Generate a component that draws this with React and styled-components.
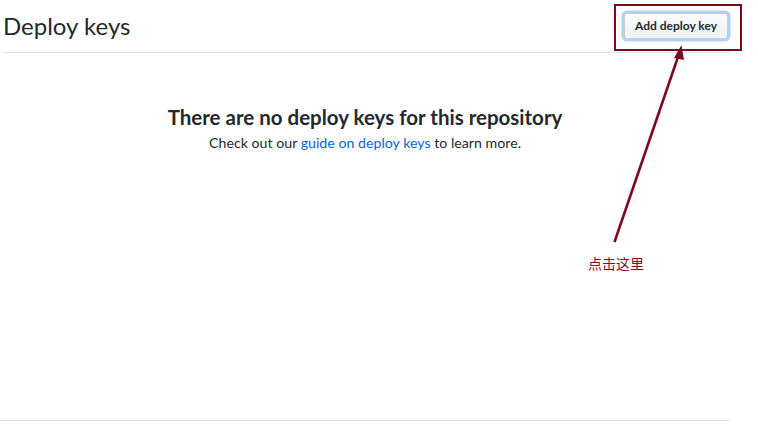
import React from "react";
import styled, { createGlobalStyle } from "styled-components";

const GlobalStyle = createGlobalStyle`
  html, body {
    margin: 0;
    padding: 0;
    background: #fff;
  }
  body {
    font-family: Lato, "Noto Sans", sans-serif;
    color: #24292e;
    font-size: 14px;
    line-height: 1.5;
  }
`;

const Page = styled.div`
  position: relative;
  width: 758px;
  height: 427px;
  overflow: hidden;
`;

const Main = styled.div`
  width: 730px;
  padding-top: 8px;
`;

const Subhead = styled.div`
  display: flex;
  align-items: center;
  margin-left: 3px;
  padding-bottom: 8px;
  border-bottom: 1px solid #e1e4e8;
`;

const Heading = styled.h2`
  flex: 1;
  margin: 0;
  font-size: 24px;
  font-weight: 400;
  line-height: 36px;
  color: #24292e;
`;

const Button = styled.button`
  margin-right: 2px;
  padding: 2px 10px;
  font-family: Lato, "Noto Sans", sans-serif;
  font-size: 12px;
  font-weight: 700;
  line-height: 20px;
  color: #24292e;
  background-color: #eff3f6;
  background-image: linear-gradient(-180deg, #fafbfc 0%, #eff3f6 90%);
  border: 1px solid rgba(27, 31, 35, 0.2);
  border-radius: 3px;
  box-shadow: 0 0 0 2.5px rgba(3, 102, 214, 0.3);
  cursor: pointer;
`;

const Blankslate = styled.div`
  height: 368px;
  box-sizing: border-box;
  padding-top: 49px;
  text-align: center;
  border-bottom: 1px solid #e1e4e8;
`;

const BlankTitle = styled.h3`
  margin: 0;
  font-size: 20.5px;
  font-weight: 700;
  line-height: 30px;
  color: #24292e;
`;

const BlankText = styled.p`
  margin: 0;
  font-size: 14.2px;
  line-height: 21px;
  color: #24292e;
`;

const Link = styled.a`
  color: #0366d6;
  text-decoration: none;
`;

const Overlay = styled.div`
  position: absolute;
  inset: 0;
  pointer-events: none;
`;

const Highlight = styled.div`
  position: absolute;
  left: 614px;
  top: 4px;
  width: 124px;
  height: 43px;
  border: 2px solid #7b0a1f;
`;

const Note = styled.span`
  position: absolute;
  left: 588px;
  top: 253px;
  font-family: "Noto Sans CJK SC", sans-serif;
  font-size: 14px;
  line-height: 20px;
  color: #8a0a1f;
  text-shadow: 0 0 2px #fff, 0 0 2px #fff, 0 0 1px #fff;
`;

const Arrow = () => (
  <svg
    width="758"
    height="427"
    viewBox="0 0 758 427"
    style={{ position: "absolute", left: 0, top: 0 }}
  >
    <line x1="614.5" y1="242" x2="679" y2="54" stroke="#7b0a1f" strokeWidth="2.6" />
    <polygon points="681.5,45 674,58 684,60" fill="#7b0a1f" />
  </svg>
);

export default function App() {
  return (
    <Page>
      <GlobalStyle />
      <Main>
        <Subhead>
          <Heading>Deploy keys</Heading>
          <Button>Add deploy key</Button>
        </Subhead>
        <Blankslate>
          <BlankTitle>There are no deploy keys for this repository</BlankTitle>
          <BlankText>
            Check out our <Link href="#">guide on deploy keys</Link> to learn more.
          </BlankText>
        </Blankslate>
      </Main>
      <Overlay>
        <Arrow />
        <Highlight />
        <Note>点击这里</Note>
      </Overlay>
    </Page>
  );
}
